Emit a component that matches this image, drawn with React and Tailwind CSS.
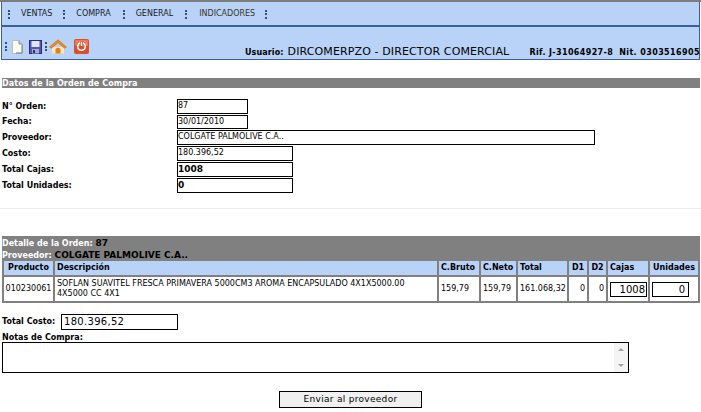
const fieldRows = [
  { label: 'N° Orden:', value: '87', width: 'w-[71px]', height: 'h-[15px]' },
  { label: 'Fecha:', value: '30/01/2010', width: 'w-[71px]', height: 'h-[14px]' },
  { label: 'Proveedor:', value: 'COLGATE PALMOLIVE C.A..', width: 'w-[418px]', height: 'h-[15px]' },
  { label: 'Costo:', value: '180.396,52', width: 'w-[116px]', height: 'h-[15px]' },
  { label: 'Total Cajas:', value: '1008', width: 'w-[116px]', height: 'h-[15px]', bold: true },
  { label: 'Total Unidades:', value: '0', width: 'w-[116px]', height: 'h-[15px]', bold: true },
];

const columns = [
  { name: 'Producto', width: 'w-[51px]', className: 'text-center' },
  { name: 'Descripción', width: 'w-[384px]' },
  { name: 'C.Bruto', width: 'w-[42px]' },
  { name: 'C.Neto', width: 'w-[37px]' },
  { name: 'Total', width: 'w-[51px]' },
  { name: 'D1', width: 'w-[20px]', className: 'text-center' },
  { name: 'D2', width: 'w-[19px]', className: 'text-center' },
  { name: 'Cajas', width: 'w-[42px]' },
  { name: 'Unidades', width: 'w-[50px]', className: 'text-center' },
];

function Dots() {
  return (
    <span className="flex h-[9px] w-[2px] flex-col justify-between">
      <span className="h-[2px] w-[2px] bg-[#33506f]" />
      <span className="h-[2px] w-[2px] bg-[#33506f]" />
      <span className="h-[2px] w-[2px] bg-[#33506f]" />
    </span>
  );
}

function PageIcon() {
  return (
    <svg width="11" height="14" viewBox="0 0 11 14">
      <path d="M0.5 0.5 H7 L10.5 4 V13.5 H0.5 Z" fill="#fbfbf4" stroke="#b8bec4" />
      <path d="M7 0.5 V4 H10.5" fill="#c9ced4" stroke="#7f8890" />
      <path d="M10 5 V13 H4" fill="none" stroke="#6f7880" />
    </svg>
  );
}

function SaveIcon() {
  return (
    <svg width="13" height="14" viewBox="0 0 13 14">
      <rect x="0.5" y="0.5" width="12" height="13" fill="#5355b8" stroke="#2a2c78" />
      <rect x="2.5" y="1" width="8" height="6" fill="#dfe3f2" />
      <rect x="3" y="9" width="7" height="4.5" fill="#a9adc6" />
      <rect x="4" y="10" width="2" height="3" fill="#30327e" />
    </svg>
  );
}

function HomeIcon() {
  return (
    <svg width="18" height="15" viewBox="0 0 18 15">
      <path d="M3 8 H15 V14.5 H3 Z" fill="#f6e7c2" />
      <path d="M0.5 8 L9 0.8 L17.5 8 L15.5 9.2 L9 3.8 L2.5 9.2 Z" fill="#ed8a1d" stroke="#c76a10" strokeWidth="0.6" />
      <path d="M6.5 14.5 V10 Q9 7.5 11.5 10 V14.5 Z" fill="#e5820f" />
    </svg>
  );
}

function PowerIcon() {
  return (
    <svg width="15" height="15" viewBox="0 0 15 15">
      <rect x="0" y="0" width="15" height="15" rx="2" fill="#dc4f2c" />
      <rect x="1" y="1" width="13" height="6" rx="1" fill="#ea7a58" />
      <circle cx="7.5" cy="7.5" r="3.8" fill="none" stroke="#fff" strokeWidth="1.6" />
      <path d="M7.5 2.8 V7" stroke="#dc4f2c" strokeWidth="3" />
      <path d="M7.5 3 V7" stroke="#fff" strokeWidth="1.5" />
    </svg>
  );
}

export default function App() {
  return (
    <div className="h-[412px] w-[701px] overflow-hidden bg-white font-['DejaVu_Sans',sans-serif] text-[8px] text-black">
      <div className="h-[2px] bg-[#7d7d7d]" />
      <div className="ml-px w-[699px] border-x border-b border-[#3b5f9a] bg-[#b9d3f8]">
        <nav className="flex h-[25px] items-center border-b-2 border-[#3b5f9a] pt-px pl-[6px] text-[#1a1a1a]">
          <Dots />
          <span className="ml-[11px]">VENTAS</span>
          <span className="ml-[11px]"><Dots /></span>
          <span className="ml-[11px]">COMPRA</span>
          <span className="ml-[12px]"><Dots /></span>
          <span className="ml-[11px]">GENERAL</span>
          <span className="ml-[12px]"><Dots /></span>
          <span className="ml-[12px] text-[#3a3420]">INDICADORES</span>
          <span className="ml-[10px]"><Dots /></span>
        </nav>
        <div className="flex h-[32px] items-start pl-[3px]">
          <div className="mt-[12px] flex items-center">
            <Dots />
            <span className="ml-[5px]"><PageIcon /></span>
            <span className="ml-[6px]"><SaveIcon /></span>
            <span className="ml-[3px]"><Dots /></span>
            <span className="ml-[2px]"><HomeIcon /></span>
            <span className="ml-[7px]"><PowerIcon /></span>
          </div>
          <div className="mt-[17px] ml-[156px] flex items-baseline whitespace-nowrap">
            <span className="text-[8px] font-bold tracking-[0.1px]">Usuario:</span>
            <span className="ml-[4px] text-[11px] tracking-[0.12px]">DIRCOMERPZO - DIRECTOR COMERCIAL</span>
            <span className="ml-[20px] text-[8px] font-bold tracking-[0.37px]">Rif. J-31064927-8</span>
            <span className="ml-[6px] text-[8px] font-bold tracking-[0.4px]">Nit. 0303516905</span>
          </div>
        </div>
      </div>

      <div className="mt-[18px] ml-[2px] h-[10px] w-[698px] overflow-hidden bg-[#808080] pt-px text-[8px] leading-[10px] font-bold tracking-[0.1px] text-white">
        Datos de la Orden de Compra
      </div>

      <div className="mt-[11px] flex flex-col gap-px pl-[2px]">
        {fieldRows.map((row) => (
          <div key={row.label} className="flex items-center">
            <span className="w-[175px] text-[8px] font-bold">{row.label}</span>
            <div className={`${row.width} ${row.height} border border-black leading-[12px] ${row.bold ? 'text-[9px] font-bold' : 'text-[8px]'}`}>
              {row.value}
            </div>
          </div>
        ))}
      </div>

      <div className="mt-[15px] h-px bg-[#eeeeee]" />

      <div className="mt-[27px] ml-[2px] h-[25px] w-[698px] bg-[#808080] pt-px text-[8px] leading-[12px] font-bold text-white">
        <div>Detalle de la Orden: <span className="text-[9px] text-black">87</span></div>
        <div className="-mt-px">Proveedor: <span className="text-[9px] text-black">COLGATE PALMOLIVE C.A..</span></div>
      </div>

      <table className="ml-[2px] w-[698px] table-fixed border-collapse border-2 border-t-0 border-[#808080]">
        <thead>
          <tr className="h-[15px] bg-[#b9d3f8] text-[8px] font-bold">
            {columns.map((col) => (
              <th key={col.name} className={`${col.width} ${col.className || 'pl-[2px] text-left'} border-x-2 border-[#808080] p-0 font-bold`}>
                {col.name}
              </th>
            ))}
          </tr>
        </thead>
        <tbody>
          <tr className="h-[26px] border-t-2 border-[#808080] text-[8px]">
            <td className="border-x-2 border-[#808080] p-0 text-center">010230061</td>
            <td className="border-x-2 border-[#808080] p-0 pl-[2px] leading-[10px]">
              SOFLAN SUAVITEL FRESCA PRIMAVERA 5000CM3 AROMA ENCAPSULADO 4X1X5000.00
              <br />
              4X5000 CC 4X1
            </td>
            <td className="border-x-2 border-[#808080] p-0 pl-[2px]">159,79</td>
            <td className="border-x-2 border-[#808080] p-0 pl-[2px]">159,79</td>
            <td className="border-x-2 border-[#808080] p-0 pl-[2px]">161.068,32</td>
            <td className="border-x-2 border-[#808080] p-0 pr-[2px] text-right">0</td>
            <td className="border-x-2 border-[#808080] p-0 pr-[2px] text-right">0</td>
            <td className="border-x-2 border-[#808080] p-0 pl-[2px]">
              <div className="mt-px h-[15px] w-[37px] border border-black pr-px text-right text-[10px] leading-[14px]">1008</div>
            </td>
            <td className="border-x-2 border-[#808080] p-0 pl-[2px]">
              <div className="mt-px h-[15px] w-[37px] border border-black pr-[3px] text-right text-[10px] leading-[14px]">0</div>
            </td>
          </tr>
        </tbody>
      </table>

      <div className="mt-[11px] flex items-center pl-[2px]">
        <span className="w-[59px] font-bold">Total Costo:</span>
        <div className="h-[16px] w-[117px] border border-black pl-[2px] text-[10px] leading-[14px] tracking-[0.3px]">180.396,52</div>
      </div>

      <div className="mt-[3px] pl-[2px] leading-[9px] font-bold">Notas de Compra:</div>

      <div className="ml-[2px] flex h-[31px] w-[627px] justify-end border border-black">
        <div className="flex w-[14px] flex-col items-center justify-between bg-[#f4f4f4] py-[5px]">
          <span className="h-0 w-0 border-x-[3px] border-b-[3px] border-x-transparent border-b-[#a0a0a0]" />
          <span className="h-0 w-0 border-x-[3px] border-t-[3px] border-x-transparent border-t-[#a0a0a0]" />
        </div>
      </div>

      <div className="mt-[18px] flex pl-[279px]">
        <button className="h-[17px] w-[143px] border border-black bg-[#f0f0f0] text-[9px] leading-[15px] tracking-[0.3px]">
          Enviar al proveedor
        </button>
      </div>
    </div>
  );
}
